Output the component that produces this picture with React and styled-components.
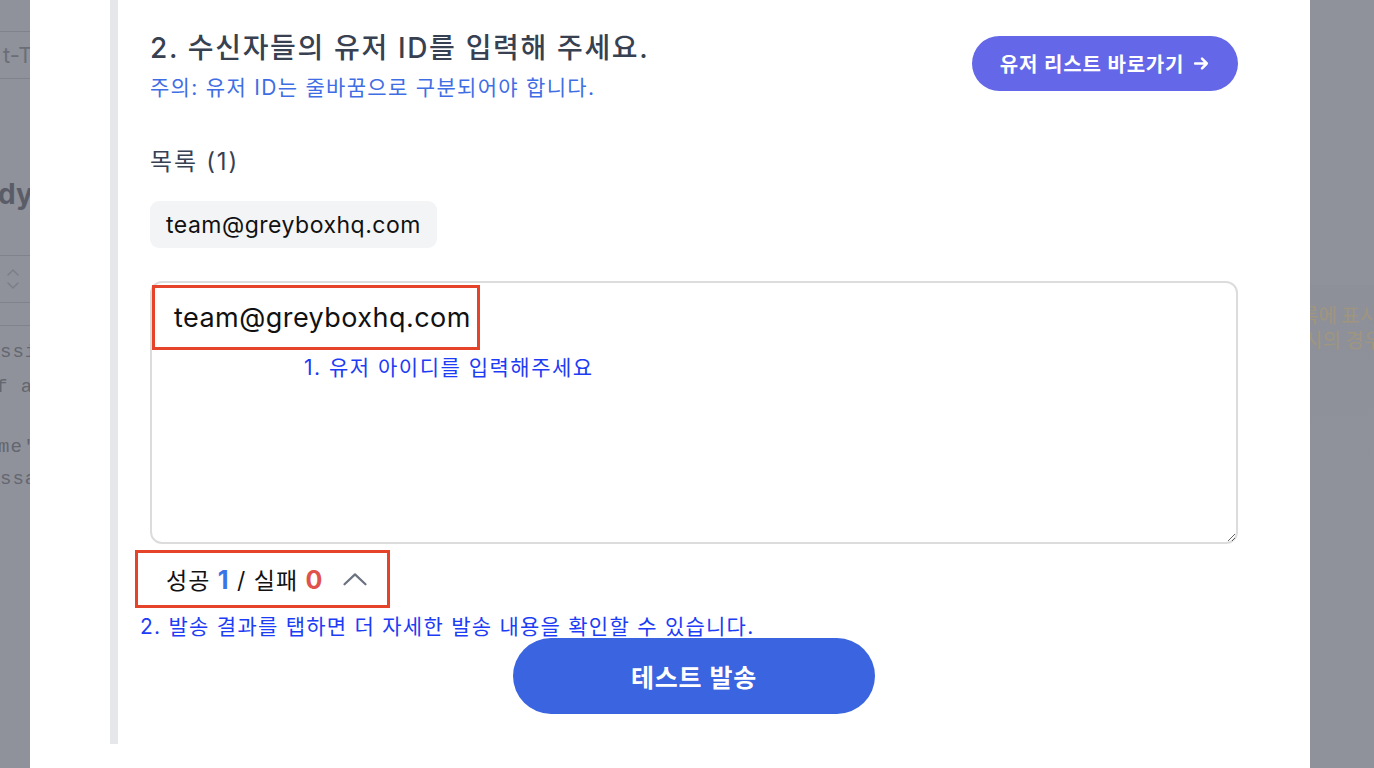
import React from "react";
import styled, { createGlobalStyle } from "styled-components";

const GlobalStyle = createGlobalStyle`
  html, body {
    margin: 0;
    padding: 0;
    height: 100%;
    overflow: hidden;
  }
  body {
    background: #8f929b;
    font-family: "Inter", "Noto Sans CJK KR", sans-serif;
  }
`

const Page = styled.div`
  display: flex;
  height: 768px;
  width: 1374px;
  overflow: hidden;
`

// faded page behind the modal
const GhostLeft = styled.div`
  width: 30px;
  flex: 0 0 30px;
  overflow: hidden;
  display: flex;
  flex-direction: column;
`
const GhostLine = styled.div`
  height: 1px;
  background: #80838c;
  margin-top: ${(p) => p.$gap}px;
`
const GhostRow = styled.div`
  white-space: nowrap;
  height: ${(p) => p.$h}px;
  line-height: ${(p) => p.$h}px;
  margin-top: ${(p) => p.$gap || 0}px;
  margin-left: ${(p) => p.$shift || 0}px;
  color: ${(p) => p.$color || "#63666f"};
  font-family: ${(p) => (p.$mono ? '"Liberation Mono", monospace' : '"Inter", sans-serif')};
  font-size: ${(p) => p.$size}px;
  font-weight: ${(p) => p.$weight || 400};
  letter-spacing: ${(p) => p.$ls || 0}px;
`
const GhostChevron = styled.div`
  display: flex;
  padding-left: 4px;
  height: 46px;
  align-items: center;
`

const GhostRight = styled.div`
  flex: 1;
  display: flex;
  flex-direction: column;
  overflow: hidden;
`
const GhostBand = styled.div`
  margin-top: 285px;
  flex: 1;
  background: linear-gradient(#8d9099, #8f929b 40%);
  display: flex;
  flex-direction: column;
  padding-top: 18px;
  gap: 2px;
`
const GhostOrange = styled.div`
  white-space: nowrap;
  color: #a0957f;
  font-size: 20px;
  line-height: 23px;
  margin-left: ${(p) => p.$shift}px;
  font-family: "Noto Sans CJK KR", sans-serif;
`

const Modal = styled.div`
  flex: 0 0 1280px;
  background: #fff;
  padding: 0 72px 0 80px;
  box-sizing: border-box;
  height: 768px;
`
const Section = styled.section`
  border-left: 8px solid #e5e7eb;
  padding: 28px 0 30px 32px;
  display: flex;
  flex-direction: column;
`
const HeaderRow = styled.div`
  display: flex;
  justify-content: space-between;
  align-items: flex-start;
`
const Title = styled.h2`
  margin: 0;
  font-size: 28px;
  line-height: 40px;
  font-weight: 500;
  letter-spacing: 1.65px;
  color: #374151;
`
const Notice = styled.p`
  margin: 5px 0 0;
  font-size: 21px;
  line-height: 30px;
  letter-spacing: 1.3px;
  color: #3f6ee4;
`
const PillButton = styled.button`
  border: none;
  cursor: pointer;
  border-radius: 999px;
  font-family: inherit;
  color: #fff;
  font-weight: 600;
  letter-spacing: 0.8px;
  background: ${(p) => p.$bg};
  font-size: ${(p) => p.$size}px;
  width: ${(p) => p.$w}px;
  height: ${(p) => p.$h}px;
  display: flex;
  align-items: center;
  justify-content: center;
  gap: 9px;
`
const ListLabel = styled.div`
  margin-top: 42px;
  font-size: 24px;
  line-height: 34px;
  letter-spacing: 1.8px;
  color: #374151;
`
const ChipRow = styled.div`
  margin-top: 22px;
  display: flex;
`
const Chip = styled.div`
  background: #f3f4f6;
  border-radius: 9px;
  padding: 0 16px;
  height: 47px;
  display: flex;
  align-items: center;
  font-size: 23px;
  letter-spacing: 0.5px;
  color: #111;
`
const InputWrap = styled.div`
  position: relative;
  margin-top: 33px;
`
const IdInput = styled.textarea`
  display: block;
  width: 100%;
  box-sizing: border-box;
  height: 263px;
  border: 2px solid #dcdcdc;
  border-radius: 12px;
  padding: 15px 22px;
  font-family: inherit;
  font-size: 27px;
  line-height: 40px;
  letter-spacing: 0.45px;
  color: #111;
  resize: vertical;
  outline: none;
`
const Highlight = styled.div`
  position: absolute;
  border: 3px solid #e5432a;
  box-sizing: border-box;
  left: ${(p) => p.$x}px;
  top: ${(p) => p.$y}px;
  width: ${(p) => p.$w}px;
  height: ${(p) => p.$h}px;
  pointer-events: none;
`
const Annotation = styled.div`
  color: #1d3cf5;
  font-size: 21px;
  line-height: 26px;
  letter-spacing: 1.25px;
  white-space: nowrap;
`
const InputNote = styled(Annotation)`
  position: absolute;
  left: 154px;
  top: 74px;
  letter-spacing: 1.5px;
`
const ResultRow = styled.div`
  margin: 6px 0 0 -15px;
  width: 255px;
  height: 58px;
  box-sizing: border-box;
  border: 3px solid #e5432a;
  display: flex;
  align-items: center;
  padding-left: 28px;
  gap: 9px;
  font-size: 23px;
  letter-spacing: 1px;
  color: #111;
`
const Count = styled.span`
  font-weight: 700;
  font-size: 25px;
  color: ${(p) => p.$color};
`
const ResultNote = styled(Annotation)`
  margin: 6px 0 0 -10px;
`
const SendRow = styled.div`
  display: flex;
  justify-content: center;
  margin-top: -2px;
`

const ArrowRight = () => (
  <svg width="17" height="17" viewBox="0 0 16 16" fill="none" stroke="#fff" strokeWidth="2.4" strokeLinecap="round" strokeLinejoin="round">
    <path d="M2 8h11M8.5 3.5L13 8l-4.5 4.5" />
  </svg>
)

const ChevronUp = () => (
  <svg width="28" height="28" viewBox="0 0 24 24" fill="none" stroke="#6b7280" strokeWidth="1.9" strokeLinecap="round" strokeLinejoin="round" style={{ marginLeft: 9 }}>
    <path d="M3 16.5l9-8.5 9 8.5" />
  </svg>
)

const GhostUpDown = () => (
  <svg width="18" height="30" viewBox="0 0 18 30" fill="none" stroke="#7c7f88" strokeWidth="1.6" strokeLinecap="round" strokeLinejoin="round">
    <path d="M4 11l5-5 5 5M4 19l5 5 5-5" />
  </svg>
)

const App = () => {
  return (
    <>
      <GlobalStyle />
      <Page>
        <GhostLeft>
          <GhostLine $gap={31} />
          <GhostRow $h={46} $size={22} $shift={3} $color="#6b6e77">t-Type</GhostRow>
          <GhostLine $gap={0} />
          <GhostRow $h={60} $gap={85} $size={28} $weight={700} $shift={-2} $color="#5a5d67">dy</GhostRow>
          <GhostLine $gap={31} />
          <GhostChevron><GhostUpDown /></GhostChevron>
          <GhostLine $gap={0} />
          <GhostLine $gap={22} />
          <GhostRow $h={34} $gap={9} $size={19} $ls={1} $mono>ssion</GhostRow>
          <GhostRow $h={34} $gap={1} $size={19} $ls={1} $shift={-4} $mono>f a</GhostRow>
          <GhostRow $h={34} $gap={26} $size={19} $ls={1} $shift={-2} $mono>me'</GhostRow>
          <GhostRow $h={30} $size={19} $ls={1} $mono>ssa</GhostRow>
        </GhostLeft>

        <Modal>
          <Section>
            <HeaderRow>
              <div>
                <Title>2. 수신자들의 유저 ID를 입력해 주세요.</Title>
                <Notice>주의: 유저 ID는 줄바꿈으로 구분되어야 합니다.</Notice>
              </div>
              <PillButton $bg="#6467e8" $size={20} $w={266} $h={55} style={{ marginTop: 8 }}>
                유저 리스트 바로가기 <ArrowRight />
              </PillButton>
            </HeaderRow>

            <ListLabel>목록 (1)</ListLabel>
            <ChipRow>
              <Chip>team@greyboxhq.com</Chip>
            </ChipRow>

            <InputWrap>
              <IdInput defaultValue="team@greyboxhq.com" spellCheck={false} />
              <Highlight $x={2} $y={4} $w={328} $h={65} />
              <InputNote>1. 유저 아이디를 입력해주세요</InputNote>
            </InputWrap>

            <ResultRow>
              <span>성공 <Count $color="#3b74e6">1</Count> / 실패 <Count $color="#e0524b">0</Count></span>
              <ChevronUp />
            </ResultRow>
            <ResultNote>2. 발송 결과를 탭하면 더 자세한 발송 내용을 확인할 수 있습니다.</ResultNote>

            <SendRow>
              <PillButton $bg="#3a64e0" $size={25} $w={362} $h={76}>테스트 발송</PillButton>
            </SendRow>
          </Section>
        </Modal>

        <GhostRight>
          <GhostBand>
            <GhostOrange $shift={-10}>록에 표시됩니다</GhostOrange>
            <GhostOrange $shift={-6}>시의 경우</GhostOrange>
          </GhostBand>
        </GhostRight>
      </Page>
    </>
  );
};

export default App;
